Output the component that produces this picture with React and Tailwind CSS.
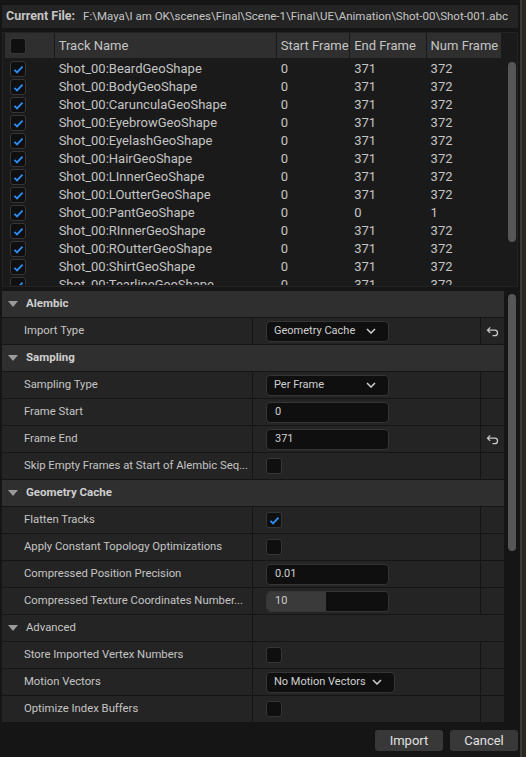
import React from "react";

const tracks = [
  ["Beard", "0", "371", "372"],
  ["Body", "0", "371", "372"],
  ["Caruncula", "0", "371", "372"],
  ["Eyebrow", "0", "371", "372"],
  ["Eyelash", "0", "371", "372"],
  ["Hair", "0", "371", "372"],
  ["LInner", "0", "371", "372"],
  ["LOutter", "0", "371", "372"],
  ["Pant", "0", "0", "1"],
  ["RInner", "0", "371", "372"],
  ["ROutter", "0", "371", "372"],
  ["Shirt", "0", "371", "372"],
  ["Tearline", "0", "371", "372"],
];

const Check = ({ on }) => (
  <div className="w-4 h-4 shrink-0 rounded-[3px] bg-[#0f0f0f] border border-[#363636] flex items-center justify-center">
    {on && (
      <svg viewBox="0 0 16 16" className="w-[13px] h-[13px]">
        <path d="M3 8.5l3.2 3.2L13 4.5" stroke="#2c8df4" strokeWidth="2.3" fill="none" />
      </svg>
    )}
  </div>
);

const Chevron = () => (
  <svg viewBox="0 0 10 6" className="w-[10px] h-[6px]">
    <path d="M1 1l4 4 4-4" stroke="#d0d0d0" strokeWidth="1.5" fill="none" />
  </svg>
);

const Reset = () => (
  <svg viewBox="0 0 14 12" className="w-[13px] h-[11px]">
    <path d="M4.5 1.5L1.5 4.5 4.5 7.5M1.5 4.5H9.5a3 3 0 0 1 0 6H7" stroke="#c8c8c8" strokeWidth="1.4" fill="none" />
  </svg>
);

const Tri = () => (
  <svg viewBox="0 0 10 6" className="w-[10px] h-[6px]">
    <path d="M0 0h10L5 6z" fill="#9a9a9a" />
  </svg>
);

const Dropdown = ({ label, w = "w-[123px]" }) => (
  <div className={`${w} h-[21px] bg-[#0f0f0f] border border-[#353535] rounded-[4px] flex items-center justify-between pl-[7px] pr-[12px] text-[11px] text-[#cfcfcf]`}>
    <span>{label}</span>
    <Chevron />
  </div>
);

const Field = ({ value, slider }) => (
  <div className="w-[123px] h-[21px] bg-[#0f0f0f] border border-[#353535] rounded-[4px] relative overflow-hidden flex items-center text-[11px] text-[#cfcfcf]">
    {slider && <div className="absolute left-0 top-0 bottom-0 w-[59px] bg-[#3a3a3a] rounded-l-[3px]" />}
    <span className="relative pl-[8px]">{value}</span>
  </div>
);

const rows = [
  { cat: "Alembic" },
  { name: "Import Type", value: <Dropdown label="Geometry Cache" />, reset: true },
  { cat: "Sampling" },
  { name: "Sampling Type", value: <Dropdown label="Per Frame" /> },
  { name: "Frame Start", value: <Field value="0" /> },
  { name: "Frame End", value: <Field value="371" />, reset: true },
  { name: "Skip Empty Frames at Start of Alembic Seq...", value: <Check /> },
  { cat: "Geometry Cache" },
  { name: "Flatten Tracks", value: <Check on /> },
  { name: "Apply Constant Topology Optimizations", value: <Check /> },
  { name: "Compressed Position Precision", value: <Field value="0.01" /> },
  { name: "Compressed Texture Coordinates Number...", value: <Field value="10" slider /> },
  { sub: "Advanced" },
  { name: "Store Imported Vertex Numbers", value: <Check /> },
  { name: "Motion Vectors", value: <Dropdown label="No Motion Vectors" w="w-[129px]" /> },
  { name: "Optimize Index Buffers", value: <Check /> },
];

const cols = ["w-[49px]", "w-[223px]", "w-[73px]", "w-[76px]", "w-[75px]"];

export default function App() {
  return (
    <div className="w-[526px] h-[757px] bg-[#151515] flex font-['Roboto',sans-serif] overflow-hidden">
      <div className="w-[520px] flex flex-col pt-[5px]">
        {/* current file */}
        <div className="ml-[2px] w-[516px] h-[23px] bg-[#242424] flex items-center pl-[4px] gap-[8px]">
          <span className="text-[12.5px] font-bold text-[#c4c4c4]">Current File:</span>
          <span className="text-[11.5px] text-[#c4c4c4]">F:\Maya\I am OK\scenes\Final\Scene-1\Final\UE\Animation\Shot-00\Shot-001.abc</span>
        </div>

        {/* tracks table */}
        <div className="ml-[2px] mt-[4px] w-[516px] h-[255px] bg-[#1a1a1a] border border-[#232323] flex pl-[2px]">
          <div className="w-[496px] flex flex-col">
            <div className="h-[25px] flex gap-px text-[13px] text-[#c4c4c4]">
              <div className={`${cols[0]} bg-[#2f2f2f] flex items-center pl-[5px]`}>
                <Check />
              </div>
              {["Track Name", "Start Frame", "End Frame", "Num Frame"].map((h, i) => (
                <div key={h} className={`${cols[i + 1]} bg-[#2f2f2f] flex items-center pl-[4px] overflow-hidden whitespace-nowrap`}>
                  {h}
                </div>
              ))}
            </div>
            <div className="mt-[2px] h-[225px] overflow-hidden">
              {tracks.map(([n, s, e, c]) => (
                <div key={n} className="h-[18px] flex gap-px items-center text-[13px] text-[#c4c4c4]">
                  <div className={`${cols[0]} flex items-center pl-[5px]`}>
                    <Check on />
                  </div>
                  <div className={`${cols[1]} pl-[4px] whitespace-nowrap`}>Shot_00:{n}GeoShape</div>
                  <div className={`${cols[2]} pl-[4px]`}>{s}</div>
                  <div className={`${cols[3]} pl-[4px]`}>{e}</div>
                  <div className={`${cols[4]} pl-[4px]`}>{c}</div>
                </div>
              ))}
            </div>
          </div>
          <div className="ml-[7px] pt-[29px]">
            <div className="w-[8px] h-[180px] rounded-full bg-[#565656]" />
          </div>
        </div>

        {/* details */}
        <div className="mt-[4px] flex h-[432px]">
          <div className="ml-[2px] w-[502px] flex flex-col gap-px">
            {rows.map((r, i) =>
              r.cat ? (
                <div key={i} className="h-[26px] bg-[#2f2f2f] flex items-center pl-[6px] gap-[8px] text-[11.5px] font-bold text-[#cfcfcf]">
                  <Tri />
                  <span>{r.cat}</span>
                </div>
              ) : r.sub ? (
                <div key={i} className="h-[26px] flex gap-px">
                  <div className="w-[250px] bg-[#242424] flex items-center pl-[6px] gap-[8px] text-[11.3px] text-[#c4c4c4]">
                    <Tri />
                    <span>{r.sub}</span>
                  </div>
                  <div className="flex-1 bg-[#242424]" />
                </div>
              ) : (
                <div key={i} className="h-[26px] flex gap-px text-[11.3px] text-[#c4c4c4]">
                  <div className="w-[250px] bg-[#242424] flex items-center pl-[22px] whitespace-nowrap overflow-hidden">
                    {r.name}
                  </div>
                  <div className="w-[227px] bg-[#242424] flex items-center pl-[13px]">{r.value}</div>
                  <div className="flex-1 bg-[#242424] flex items-center justify-center">{r.reset && <Reset />}</div>
                </div>
              )
            )}
          </div>
          <div className="ml-[4px] pt-[3px]">
            <div className="w-[8px] h-[257px] rounded-full bg-[#565656]" />
          </div>
        </div>

        {/* buttons */}
        <div className="flex justify-end gap-[7px] pr-[2px] mt-[7px]">
          <button className="w-[68px] h-[21px] bg-[#383838] rounded-[3px] text-[13px] text-[#e0e0e0]">Import</button>
          <button className="w-[68px] h-[21px] bg-[#383838] rounded-[3px] text-[13px] text-[#e0e0e0]">Cancel</button>
        </div>
      </div>
      <div className="w-[2px] bg-[#3a3a3a]" />
      <div className="flex-1 bg-[#2b2520]" />
    </div>
  );
}
